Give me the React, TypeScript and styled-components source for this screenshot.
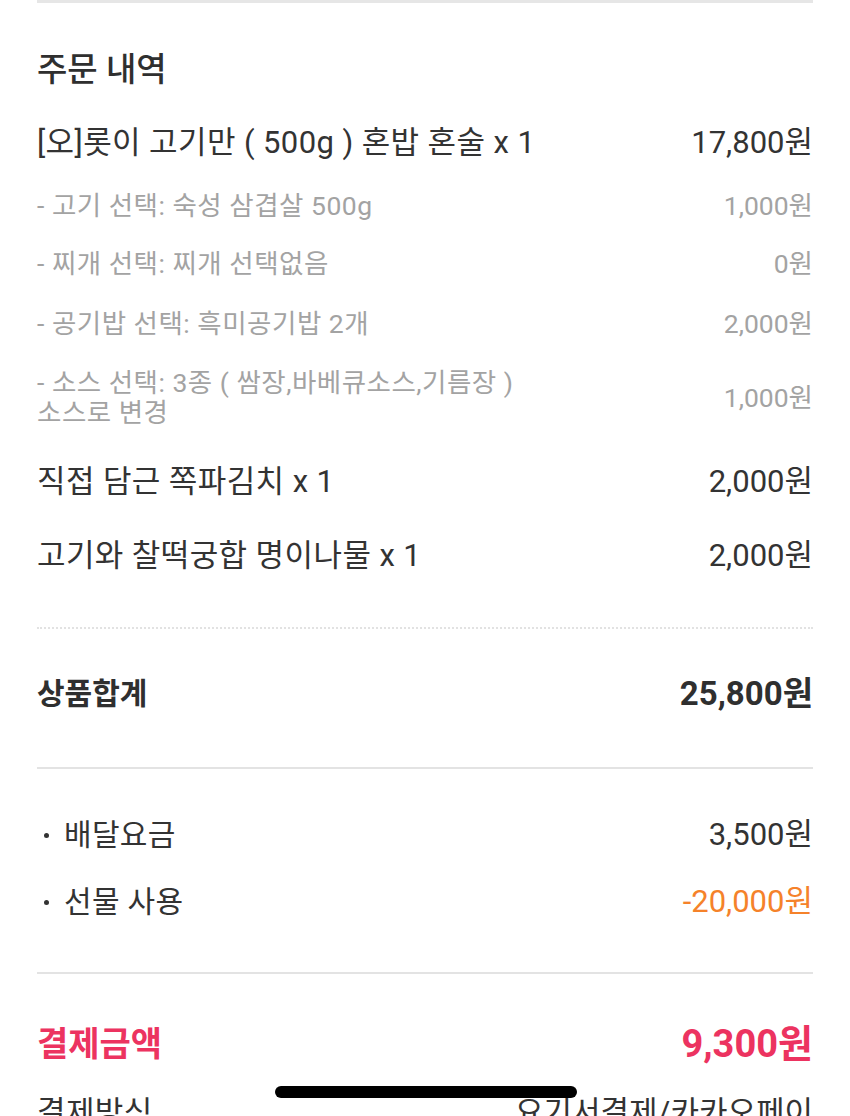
import React from 'react';
import styled, { createGlobalStyle } from 'styled-components';

const FONT = `Roboto, "Noto Sans CJK KR", sans-serif`;

const GlobalStyle = createGlobalStyle`
  html, body {
    margin: 0;
    padding: 0;
    background: #ffffff;
  }
  body {
    font-family: ${FONT};
    color: #333333;
    -webkit-font-smoothing: antialiased;
  }
`;

const Page = styled.div`
  padding: 0 37px;
  height: 1116px;
  overflow: hidden;
`;

const TopLine = styled.div`
  height: 3px;
  background: #e6e6e6;
`;

const Title = styled.h2`
  margin: 47px 0 0;
  font-size: 33px;
  line-height: 40px;
  font-weight: 500;
  color: #2f2f2f;
`;

const Row = styled.div<{ $mt: number; $lh?: number }>`
  display: flex;
  justify-content: space-between;
  align-items: center;
  margin-top: ${(p) => p.$mt}px;
  line-height: ${(p) => p.$lh ?? 40}px;
`;

const ItemName = styled.span`
  font-size: 31px;
  color: #333333;
  letter-spacing: 0.4px;
`;

const Price = styled.span<{ $tone?: 'orange' }>`
  font-size: 31px;
  color: ${(p) => (p.$tone === 'orange' ? '#f5822a' : '#333333')};
  white-space: nowrap;
`;

const OptionName = styled.span`
  font-size: 26.5px;
  color: #a3a3a3;
  max-width: 525px;
  letter-spacing: 0.5px;
  word-break: keep-all;
`;

const OptionPrice = styled.span`
  font-size: 26.5px;
  color: #a3a3a3;
  white-space: nowrap;
`;

const Divider = styled.div<{ $mt: number; $dotted?: boolean }>`
  margin-top: ${(p) => p.$mt}px;
  border-top: 2px ${(p) => (p.$dotted ? 'dotted #e2e2e2' : 'solid #e3e3e3')};
`;

const TotalLabel = styled.span`
  font-size: 30px;
  font-weight: 700;
  color: #2f2f2f;
`;

const TotalValue = styled.span`
  font-size: 33px;
  font-weight: 700;
  color: #2f2f2f;
`;

const FeeLabel = styled.span`
  display: flex;
  align-items: center;
  font-size: 30px;
  color: #333333;
  letter-spacing: 0.3px;
  &::before {
    content: '';
    width: 5px;
    height: 5px;
    border-radius: 50%;
    background: #333333;
    margin: 0 15px 0 7px;
  }
`;

const PayLabel = styled.span`
  font-size: 34px;
  font-weight: 700;
  color: #ec3360;
`;

const PayValue = styled.span`
  font-size: 38px;
  font-weight: 700;
  color: #ec3360;
`;

const HomeIndicator = styled.div`
  position: fixed;
  left: 275px;
  top: 1086px;
  width: 302px;
  height: 12px;
  border-radius: 6px;
  background: #000000;
`;

const options = [
  { name: '- 고기 선택: 숙성 삼겹살 500g', price: '1,000원', mt: 28 },
  { name: '- 찌개 선택: 찌개 선택없음', price: '0원', mt: 28 },
  { name: '- 공기밥 선택: 흑미공기밥 2개', price: '2,000원', mt: 30 },
  { name: '- 소스 선택: 3종 ( 쌈장,바베큐소스,기름장 ) 소스로 변경', price: '1,000원', mt: 29 },
];

export default function App() {
  return (
    <>
      <GlobalStyle />
      <Page>
        <TopLine />
        <Title>주문 내역</Title>

        <Row $mt={33}>
          <ItemName>[오]롯이 고기만 ( 500g ) 혼밥 혼술 x 1</ItemName>
          <Price>17,800원</Price>
        </Row>
        {options.map((o) => (
          <Row key={o.name} $mt={o.mt} $lh={30}>
            <OptionName>{o.name}</OptionName>
            <OptionPrice>{o.price}</OptionPrice>
          </Row>
        ))}
        <Row $mt={34}>
          <ItemName>직접 담근 쪽파김치 x 1</ItemName>
          <Price>2,000원</Price>
        </Row>
        <Row $mt={34}>
          <ItemName>고기와 찰떡궁합 명이나물 x 1</ItemName>
          <Price>2,000원</Price>
        </Row>

        <Divider $mt={51} $dotted />
        <Row $mt={45}>
          <TotalLabel>상품합계</TotalLabel>
          <TotalValue>25,800원</TotalValue>
        </Row>

        <Divider $mt={53} />
        <Row $mt={46}>
          <FeeLabel>배달요금</FeeLabel>
          <Price>3,500원</Price>
        </Row>
        <Row $mt={27}>
          <FeeLabel>선물 사용</FeeLabel>
          <Price $tone="orange">-20,000원</Price>
        </Row>

        <Divider $mt={50} />
        <Row $mt={48} $lh={44}>
          <PayLabel>결제금액</PayLabel>
          <PayValue>9,300원</PayValue>
        </Row>
        <Row $mt={27}>
          <ItemName>결제방식</ItemName>
          <Price>요기서결제/카카오페이</Price>
        </Row>
      </Page>
      <HomeIndicator />
    </>
  );
}
